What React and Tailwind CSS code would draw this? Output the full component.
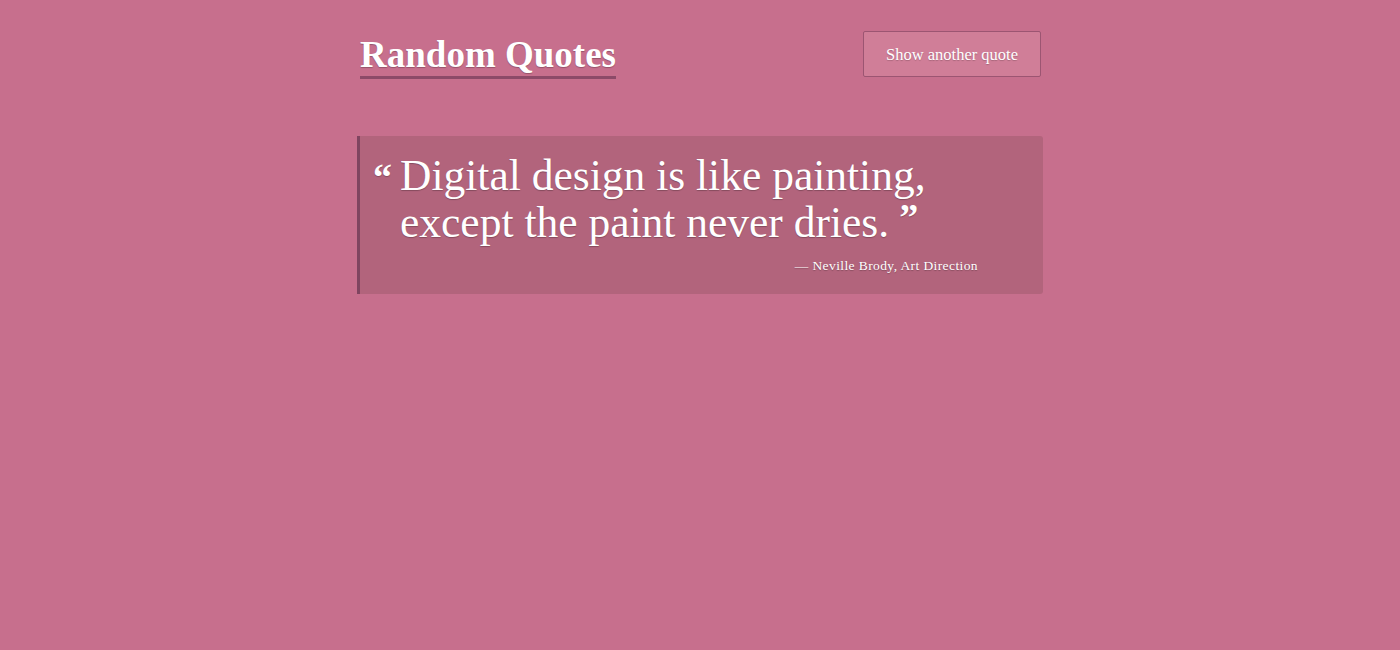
import React from "react";

export default function App() {
  const serif = { fontFamily: '"Liberation Serif", "DejaVu Serif", serif' };
  return (
    <div className="min-h-[650px] w-full bg-[#c76f8d] text-white" style={serif}>
      <div className="mx-auto w-[686px]">
        <header className="flex items-start justify-between px-[2px] pt-[31px]">
          <h1 className="ml-[1px] mt-[4px] border-b-[3px] border-[#8c4a68] pb-[1px] text-[37px] font-bold leading-[40px] [text-shadow:0_1px_1px_rgba(0,0,0,0.25)]">
            Random Quotes
          </h1>
          <button className="h-[46px] w-[178px] rounded-[2px] border border-[#9c5572] bg-[#d07e98] pt-[2px] text-[16.5px] text-white [text-shadow:0_1px_1px_rgba(0,0,0,0.2)]">
            Show another quote
          </button>
        </header>
        <blockquote className="mt-[57px] rounded-r-[3px] border-l-[3px] border-[#7f4560] bg-[#b2647c] pb-[18px] pl-[13px] pr-[20px] pt-[16px]">
          <div className="flex [text-shadow:0_1px_1px_rgba(0,0,0,0.25)]">
            <span className="mt-[7px] w-[27px] shrink-0 text-[38px] font-bold leading-[36px]">“</span>
            <p className="text-[43.5px] leading-[47px]">
              Digital design is like painting,
              <br />
              except the paint never dries.<span className="ml-[10px] align-top text-[38px] font-bold leading-[36px]">”</span>
            </p>
          </div>
          <p className="mt-[10px] pr-[45px] text-right text-[13.5px] tracking-[0.4px] [text-shadow:0_1px_1px_rgba(0,0,0,0.25)]">
            — Neville Brody, Art Direction
          </p>
        </blockquote>
      </div>
    </div>
  );
}
